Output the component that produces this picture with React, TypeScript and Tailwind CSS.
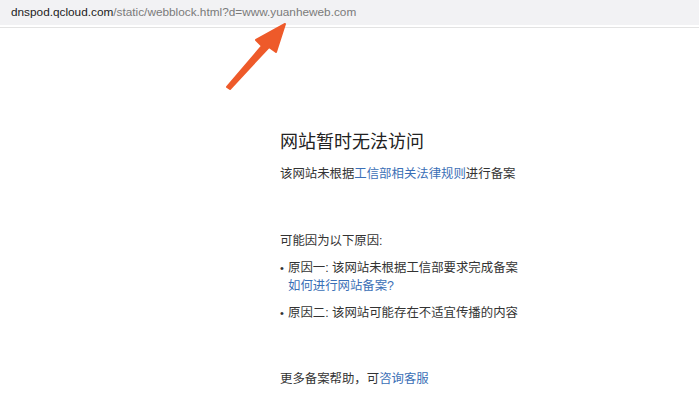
import React from "react";

const cjk = { fontFamily: '"Liberation Sans", "Noto Sans CJK SC", sans-serif' };

export default function App() {
  return (
    <div className="relative w-[699px] h-[400px] bg-white overflow-hidden" style={cjk}>
      <div className="h-[28px] border-b border-[#e3e3e3] bg-white">
        <div className="h-[25px] bg-[#f2f2f4] flex items-center pl-[11px] text-[11.8px] leading-none">
          <span className="text-[#222]">dnspod.qcloud.com</span>
          <span className="text-[#7a7a7a]">/static/webblock.html?d=www.yuanheweb.com</span>
        </div>
      </div>

      <div className="pl-[280px] pt-[102px] text-[#333]">
        <div className="text-[18px] leading-[24px] text-[#222]">网站暂时无法访问</div>
        <div className="mt-[11px] text-[12.4px] leading-[18px]">
          该网站未根据<span className="text-[#3b6fb6]">工信部相关法律规则</span>进行备案
        </div>
        <div className="mt-[49px] text-[12.4px] leading-[18px]">可能因为以下原因:</div>
        <div className="mt-[9px] text-[12.4px] leading-[18px] flex">
          <span className="w-[8px] text-[11px]">•</span>
          <div>
            <div>原因一: 该网站未根据工信部要求完成备案</div>
            <div className="text-[#3b6fb6]">如何进行网站备案?</div>
          </div>
        </div>
        <div className="mt-[9px] text-[12.4px] leading-[18px] flex">
          <span className="w-[8px] text-[11px]">•</span>
          <div>原因二: 该网站可能存在不适宜传播的内容</div>
        </div>
        <div className="mt-[48px] text-[12.4px] leading-[18px]">
          更多备案帮助，可<span className="text-[#3b6fb6]">咨询客服</span>
        </div>
      </div>

      <svg className="absolute left-0 top-0" width="699" height="400" viewBox="0 0 699 400">
        <path
          d="M227 87 L262 46 L256 40 L285 24 L276 52 L269 47 L230 89 Z"
          fill="#ee5a2a"
          stroke="#ee5a2a"
          strokeWidth="2"
          strokeLinejoin="round"
        />
      </svg>
    </div>
  );
}
